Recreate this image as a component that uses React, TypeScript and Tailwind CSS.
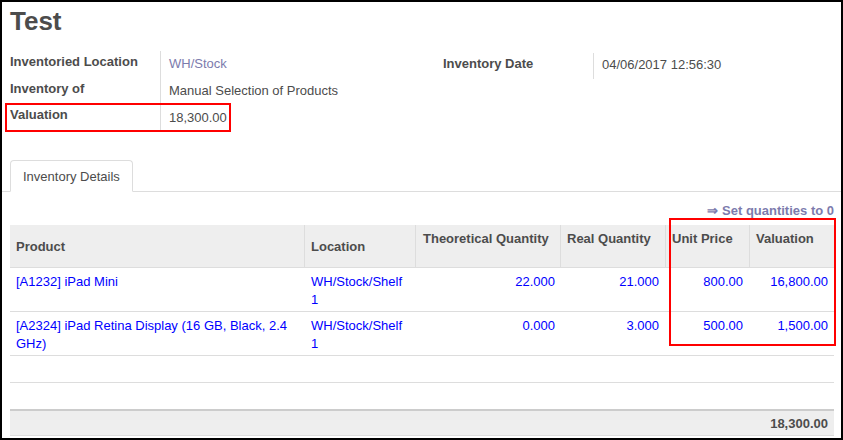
import React from "react";

const cols = "grid grid-cols-[294px_111px_145px_105px_84px_85px]";

type Row = { product: string; loc: string; theo: string; real: string; price: string; val: string };

const rows: Row[] = [
  { product: "[A1232] iPad Mini", loc: "WH/Stock/Shelf 1", theo: "22.000", real: "21.000", price: "800.00", val: "16,800.00" },
  { product: "[A2324] iPad Retina Display (16 GB, Black, 2.4 GHz)", loc: "WH/Stock/Shelf 1", theo: "0.000", real: "3.000", price: "500.00", val: "1,500.00" },
];

export default function App() {
  return (
    <div className="relative w-[843px] h-[440px] overflow-hidden border-2 border-black bg-white font-['Liberation_Sans',Arial,sans-serif] text-[13px] leading-[18px] text-[#4c4c4c]">
      {/* Title */}
      <div className="pl-[8px] pt-[6px]">
        <h1 className="h-[26px] text-[26px] leading-[26px] font-bold text-[#4c4c4c]">Test</h1>
      </div>

      {/* Fields */}
      <div className="mt-[17px] flex h-[80px] pl-[8px]">
        <div className="flex w-[433px]">
          <div className="w-[150px] pt-[2px] font-bold">
            <div className="h-[27px]">Inventoried Location</div>
            <div className="h-[26px]">Inventory of</div>
            <div className="h-[25px]">Valuation</div>
          </div>
          <div className="border-l border-[#dddddd] pl-[8px] pt-[2px]">
            <div className="h-[27px] pt-[2px] text-[#7c7bad]">WH/Stock</div>
            <div className="h-[26px] pt-[2px]">Manual Selection of Products</div>
            <div className="h-[25px] pt-[3px]">18,300.00</div>
          </div>
        </div>
        <div className="mt-[2px] flex h-[26px]">
          <div className="w-[150px] pt-[2px] font-bold">Inventory Date</div>
          <div className="border-l border-[#dddddd] pl-[8px] pt-[3px]">04/06/2017 12:56:30</div>
        </div>
      </div>

      {/* Tabs */}
      <div className="mt-[29px] flex border-b border-[#dddddd] pl-[8px]">
        <div className="-mb-px rounded-t-[4px] border border-[#dddddd] border-b-white bg-white px-[12px] pt-[7px] pb-[5px]">
          Inventory Details
        </div>
      </div>

      {/* Table section */}
      <div className="pl-[8px] pr-[7px]">
        <div className="pt-[10px] pb-[5px] text-right font-bold text-[#7c7bad]">⇒ Set quantities to 0</div>

        <div className={`${cols} h-[43px] border-b border-[#dddddd] bg-[#eeeeee] font-bold`}>
          <div className="flex items-center pl-[6px] pt-[2px]">Product</div>
          <div className="flex items-center border-l border-[#dddddd] pl-[6px] pt-[2px]">Location</div>
          <div className="border-l border-[#dddddd] pl-[7px] pt-[5px]">Theoretical Quantity</div>
          <div className="border-l border-[#dddddd] pl-[6px] pt-[5px]">Real Quantity</div>
          <div className="border-l border-[#dddddd] pl-[6px] pt-[5px]">Unit Price</div>
          <div className="border-l border-[#dddddd] pl-[6px] pt-[5px]">Valuation</div>
        </div>

        {rows.map((r) => (
          <div key={r.product} className={`${cols} h-[44px] border-b border-[#dddddd] pt-[5px] pb-[2px] text-[#0000ff]`}>
            <div className="pl-[6px] pr-[6px]">{r.product}</div>
            <div className="pl-[7px] pr-[7px]">{r.loc}</div>
            <div className="pr-[5px] text-right">{r.theo}</div>
            <div className="pr-[6px] text-right">{r.real}</div>
            <div className="pr-[6px] text-right">{r.price}</div>
            <div className="pr-[6px] text-right">{r.val}</div>
          </div>
        ))}

        <div className="h-[27px] border-b border-[#dddddd]" />
        <div className="h-[26px]" />
        <div className="flex h-[27px] items-center justify-end border-t-2 border-b border-t-[#cccccc] border-b-[#dddddd] bg-[#eeeeee] pt-[2px] pr-[6px] font-bold">
          18,300.00
        </div>
      </div>

      {/* Annotation boxes */}
      <div className="absolute left-[3px] top-[101px] h-[29px] w-[226px] border-2 border-[#ff0000]" />
      <div className="absolute left-[667px] top-[216px] h-[128px] w-[167px] border-2 border-[#ff0000]" />
    </div>
  );
}
